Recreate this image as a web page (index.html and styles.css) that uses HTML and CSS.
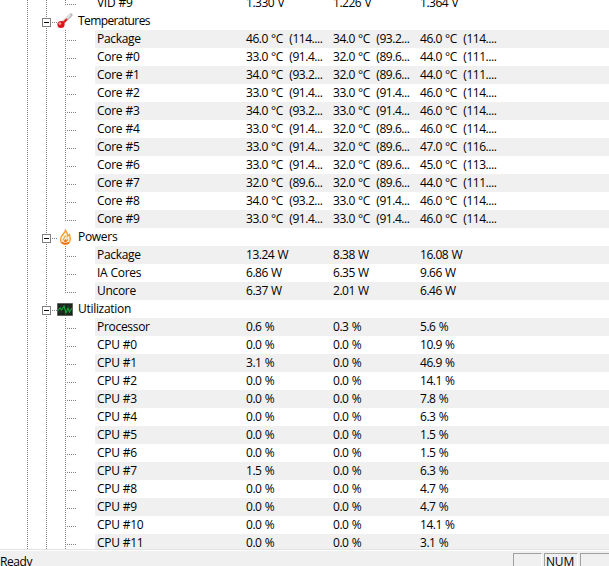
FILE: index.html
```
<!DOCTYPE html>
<html lang="en">
<head>
<meta charset="utf-8">
<title>Sensors</title>
<link rel="stylesheet" href="styles.css">
</head>
<body>
<main class="list">
<div class="row last"><i class="tree"></i><b>VID #9</b><span>1.330 V</span><span>1.226 V</span><span>1.364 V</span></div>
<div class="row group wide"><i class="tree"><i class="toggle"></i><svg class="icon" width="16" height="16" viewBox="0 0 16 16"><path d="M6 9.5 13.8 2" stroke="#b8b8b8" stroke-width="3.4" stroke-linecap="round"/><path d="M6 8.5 13.5 1.6" stroke="#e4e4e4" stroke-width="1.8"/><path d="M4.5 11.5 10 6" stroke="#e52222" stroke-width="2.2"/><circle cx="4" cy="11.5" r="3.6" fill="#db171b"/><circle cx="2.9" cy="10.6" r="1.4" fill="#ff9b9b"/></svg></i><b>Temperatures</b></div>
<div class="row alt"><i class="tree"></i><b>Package</b><span>46.0 °C&nbsp; (114....</span><span>34.0 °C&nbsp; (93.2...</span><span>46.0 °C&nbsp; (114....</span></div>
<div class="row"><i class="tree"></i><b>Core #0</b><span>33.0 °C&nbsp; (91.4...</span><span>32.0 °C&nbsp; (89.6...</span><span>44.0 °C&nbsp; (111....</span></div>
<div class="row alt"><i class="tree"></i><b>Core #1</b><span>34.0 °C&nbsp; (93.2...</span><span>32.0 °C&nbsp; (89.6...</span><span>44.0 °C&nbsp; (111....</span></div>
<div class="row"><i class="tree"></i><b>Core #2</b><span>33.0 °C&nbsp; (91.4...</span><span>33.0 °C&nbsp; (91.4...</span><span>46.0 °C&nbsp; (114....</span></div>
<div class="row alt"><i class="tree"></i><b>Core #3</b><span>34.0 °C&nbsp; (93.2...</span><span>33.0 °C&nbsp; (91.4...</span><span>46.0 °C&nbsp; (114....</span></div>
<div class="row"><i class="tree"></i><b>Core #4</b><span>33.0 °C&nbsp; (91.4...</span><span>32.0 °C&nbsp; (89.6...</span><span>46.0 °C&nbsp; (114....</span></div>
<div class="row alt"><i class="tree"></i><b>Core #5</b><span>33.0 °C&nbsp; (91.4...</span><span>32.0 °C&nbsp; (89.6...</span><span>47.0 °C&nbsp; (116....</span></div>
<div class="row"><i class="tree"></i><b>Core #6</b><span>33.0 °C&nbsp; (91.4...</span><span>32.0 °C&nbsp; (89.6...</span><span>45.0 °C&nbsp; (113....</span></div>
<div class="row alt"><i class="tree"></i><b>Core #7</b><span>32.0 °C&nbsp; (89.6...</span><span>32.0 °C&nbsp; (89.6...</span><span>44.0 °C&nbsp; (111....</span></div>
<div class="row"><i class="tree"></i><b>Core #8</b><span>34.0 °C&nbsp; (93.2...</span><span>33.0 °C&nbsp; (91.4...</span><span>46.0 °C&nbsp; (114....</span></div>
<div class="row alt last"><i class="tree"></i><b>Core #9</b><span>33.0 °C&nbsp; (91.4...</span><span>33.0 °C&nbsp; (91.4...</span><span>46.0 °C&nbsp; (114....</span></div>
<div class="row group"><i class="tree"><i class="toggle"></i><svg class="icon" width="16" height="16" viewBox="0 0 16 16"><path d="M8.5 1.5C8.5 4 3.5 5.5 3.5 10.5 3.5 13.5 5.5 15 8.3 15S13.3 13 13.3 10C13.3 8 12.7 7 12.5 5.5L10.5 7C11 4.5 9.5 3 8.5 1.5Z" fill="#fff3e0" stroke="#f99a30" stroke-width="1.4"/><path d="M8.5 6.5C8.5 8.5 6 9 6 11.5M10.5 9.5V12" stroke="#f8a23e" stroke-width="1.2" fill="none"/><path d="M5 13.5Q8.5 16 12 13.5" stroke="#ec761c" stroke-width="1.8" fill="none"/><circle cx="8.5" cy="11.7" r="1.5" fill="#ef791d"/></svg></i><b>Powers</b></div>
<div class="row alt"><i class="tree"></i><b>Package</b><span>13.24 W</span><span>8.38 W</span><span>16.08 W</span></div>
<div class="row"><i class="tree"></i><b>IA Cores</b><span>6.86 W</span><span>6.35 W</span><span>9.66 W</span></div>
<div class="row alt last"><i class="tree"></i><b>Uncore</b><span>6.37 W</span><span>2.01 W</span><span>6.46 W</span></div>
<div class="row group"><i class="tree"><i class="toggle"></i><svg class="icon" width="16" height="16" viewBox="0 0 16 16"><path d="M.5 2.5h15v12H.5z" fill="#172219" stroke="#606461"/><path d="M1 5h14M1 8h14M1 11h14M4 3v11M8 3v11M12 3v11" stroke="#294030" stroke-width=".5"/><path d="M1 9.5 3 7l1.5 2L7 5l2 7 2-5 1.5 4L15 7" fill="none" stroke="#16a73b" stroke-width="1.1"/></svg></i><b>Utilization</b></div>
<div class="row alt"><i class="tree"></i><b>Processor</b><span>0.6 %</span><span>0.3 %</span><span>5.6 %</span></div>
<div class="row"><i class="tree"></i><b>CPU #0</b><span>0.0 %</span><span>0.0 %</span><span>10.9 %</span></div>
<div class="row alt"><i class="tree"></i><b>CPU #1</b><span>3.1 %</span><span>0.0 %</span><span>46.9 %</span></div>
<div class="row"><i class="tree"></i><b>CPU #2</b><span>0.0 %</span><span>0.0 %</span><span>14.1 %</span></div>
<div class="row alt"><i class="tree"></i><b>CPU #3</b><span>0.0 %</span><span>0.0 %</span><span>7.8 %</span></div>
<div class="row"><i class="tree"></i><b>CPU #4</b><span>0.0 %</span><span>0.0 %</span><span>6.3 %</span></div>
<div class="row alt"><i class="tree"></i><b>CPU #5</b><span>0.0 %</span><span>0.0 %</span><span>1.5 %</span></div>
<div class="row"><i class="tree"></i><b>CPU #6</b><span>0.0 %</span><span>0.0 %</span><span>1.5 %</span></div>
<div class="row alt"><i class="tree"></i><b>CPU #7</b><span>1.5 %</span><span>0.0 %</span><span>6.3 %</span></div>
<div class="row"><i class="tree"></i><b>CPU #8</b><span>0.0 %</span><span>0.0 %</span><span>4.7 %</span></div>
<div class="row alt"><i class="tree"></i><b>CPU #9</b><span>0.0 %</span><span>0.0 %</span><span>4.7 %</span></div>
<div class="row"><i class="tree"></i><b>CPU #10</b><span>0.0 %</span><span>0.0 %</span><span>14.1 %</span></div>
<div class="row alt"><i class="tree"></i><b>CPU #11</b><span>0.0 %</span><span>0.0 %</span><span>3.1 %</span></div>
</main>
<footer class="status"><div class="ready">Ready</div><div class="pane first"></div><div class="pane num">NUM</div><div class="pane end"></div></footer>
</body>
</html>
```
FILE: styles.css
```
* { box-sizing: border-box; }
body {
  margin: 0;
  height: 566px;
  overflow: hidden;
  display: flex;
  flex-direction: column;
  background: #fff;
  color: #000;
  font: 12px/18px "Open Sans", sans-serif;
}
.list {
  height: 549px;
  flex: none;
  overflow: hidden;
  display: flex;
  flex-direction: column;
  justify-content: flex-end;
}
.list .row:last-child { margin-bottom: -3px; }
.row {
  --dots: repeating-linear-gradient(to bottom, #808080 0 1px, transparent 1px 2px);
  --dash: repeating-linear-gradient(to right, #808080 0 1px, transparent 1px 2px);
  display: grid;
  grid-template-columns: 95px 151px 87px 87px 1fr;
  height: 18px;
  flex: none;
  white-space: pre;
}
.row > b { font-weight: 400; padding-left: 2px; letter-spacing: -0.3px; word-spacing: 0.4px; }
.row > span { letter-spacing: -0.47px; word-spacing: 0.6px; }
.tree {
  height: 18px;
  background:
    var(--dots) 27px 0 / 1px 18px no-repeat,
    var(--dots) 46px 0 / 1px 18px no-repeat,
    var(--dots) 65px 0 / 1px 18px no-repeat,
    var(--dash) 65px 10px / 12px 1px no-repeat;
}
.last .tree {
  background:
    var(--dots) 27px 0 / 1px 18px no-repeat,
    var(--dots) 46px 0 / 1px 18px no-repeat,
    var(--dots) 65px 0 / 1px 11px no-repeat,
    var(--dash) 65px 10px / 12px 1px no-repeat;
}
.alt { background: linear-gradient(to right, #fff 95px, #f0f0f0 95px); }
.group { grid-template-columns: 76px 1fr; }
.wide > b { letter-spacing: -0.6px; }
.group .tree {
  display: flex;
  padding-left: 42px;
  background:
    var(--dots) 27px 0 / 1px 18px no-repeat,
    var(--dots) 46px 0 / 1px 18px no-repeat,
    var(--dash) 52px 10px / 6px 1px no-repeat;
}
.toggle {
  width: 9px;
  height: 9px;
  margin: 6px 6px 0 0;
  border: 1px solid #808080;
  background: linear-gradient(#000, #000) 1px 3px / 5px 1px no-repeat #fff;
}
.icon { flex: none; margin-top: 1px; fill: none; }
.status {
  flex: 1;
  display: flex;
  background: #f0f0f0;
  border-top: 1px solid #e3e3e3;
  box-shadow: inset 0 1px #fff;
  padding-top: 3px;
  overflow: hidden;
}
.ready { width: 513px; height: 18px; letter-spacing: -0.4px; }
.pane {
  flex: none;
  height: 20px;
  border: 1px solid #a0a0a0;
  border-right-color: #fff;
  border-bottom-color: #fff;
}
.first { width: 29px; margin-right: 2px; }
.num { width: 34px; margin-right: 2px; padding-left: 1px; line-height: 16px; letter-spacing: -0.2px; }
.end { flex: 1; border-right: 0; }
```
